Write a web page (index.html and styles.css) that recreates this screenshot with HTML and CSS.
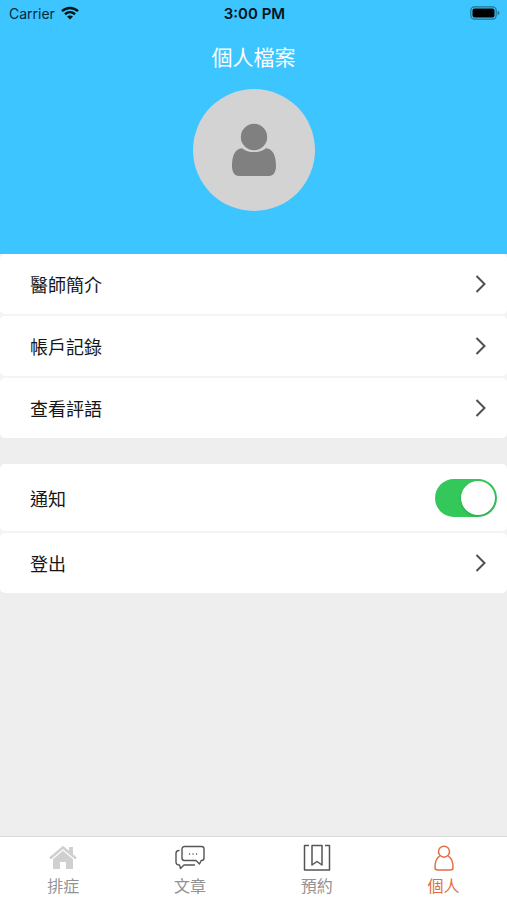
FILE: index.html
```html
<!DOCTYPE html>
<html lang="zh-Hant">
<head>
<meta charset="utf-8">
<meta name="viewport" content="width=device-width, initial-scale=1">
<title>個人檔案</title>
<link rel="stylesheet" href="styles.css">
</head>
<body>
<header class="profile">
  <div class="status">
    <div class="status-left">
      <span>Carrier</span>
      <svg class="wifi" width="18" height="14" viewBox="0 0 18 14" aria-hidden="true">
        <path d="M1 5.2C5.6 .8 12.4 .8 17 5.2M4 8.2c3-2.7 7-2.7 10 0" fill="none" stroke="#06141a" stroke-width="2.5"/>
        <path d="M6 10.5c1.8-1.5 4.2-1.5 6 0l-3 3z" fill="#06141a"/>
      </svg>
    </div>
    <span class="time">3:00 PM</span>
    <svg class="battery" width="30" height="14" viewBox="0 0 30 14" aria-hidden="true">
      <rect x=".8" y=".8" width="25.4" height="12.4" rx="3.6" fill="none" stroke="#237394" stroke-width="1.2"/>
      <rect x="2.5" y="2.5" width="22" height="9" rx="2" fill="#000"/>
      <path d="M27.6 4.8c2.4 .8 2.4 3.6 0 4.4z" fill="#237394"/>
    </svg>
  </div>
  <h1>個人檔案</h1>
  <div class="avatar">
    <svg width="44" height="54" viewBox="0 0 44 54" role="img" aria-label="頭像">
      <circle cx="22" cy="14" r="13.2" fill="#808080"/>
      <path d="M10 25.2C3 25.5 0 33 0 43c0 6 2.5 10 7 10h30c4.500 0 7-4 7-10 0-10-3-17.500-10-17.800-6.500 5.200-17.500 5.200-24 0z" fill="#808080"/>
    </svg>
  </div>
</header>
<main>
  <section class="group">
    <a class="row" href="#intro">醫師簡介<svg class="chevron" width="12" height="18" viewBox="0 0 12 18" aria-hidden="true"><path d="M1.500 1l8 8-8 8"/></svg></a>
    <a class="row" href="#account">帳戶記錄<svg class="chevron" width="12" height="18" viewBox="0 0 12 18" aria-hidden="true"><path d="M1.500 1l8 8-8 8"/></svg></a>
    <a class="row" href="#reviews">查看評語<svg class="chevron" width="12" height="18" viewBox="0 0 12 18" aria-hidden="true"><path d="M1.500 1l8 8-8 8"/></svg></a>
  </section>
  <section class="group">
    <div class="row row-switch">
      <label for="notify">通知</label>
      <input class="switch" id="notify" type="checkbox" role="switch" checked>
    </div>
    <a class="row" href="#logout">登出<svg class="chevron" width="12" height="18" viewBox="0 0 12 18" aria-hidden="true"><path d="M1.500 1l8 8-8 8"/></svg></a>
  </section>
</main>
<nav class="tabs">
  <a href="#triage">
    <svg width="30" height="28" viewBox="0 0 30 28" aria-hidden="true">
      <path d="M2 14.500L15 3.500l13 11" fill="none" stroke="#d0d0d0" stroke-width="2.600"/>
      <path d="M21 3h4v8l-4-3.500zM5 15.200l10-8.500 10 8.500V25h-7v-7h-6v7H5z" fill="#d0d0d0"/>
    </svg>
    排症
  </a>
  <a href="#articles">
    <svg width="30" height="28" viewBox="0 0 30 28" fill="none" stroke="#555" stroke-width="1.400" stroke-linejoin="round" stroke-linecap="round" aria-hidden="true">
      <path d="M9.500 2.500h17a2.500 2.500 0 0 1 2.500 2.500v9a2.500 2.500 0 0 1-2.500 2.500H26.200l-1.700 3.500-3.500-3.500H9.500A2.500 2.500 0 0 1 7 14V5a2.500 2.500 0 0 1 2.500-2.500z"/>
      <path d="M4 6.500C2 6.500 1 7.500 1 9.500V18c0 2 1 3 3.500 3L5.500 24.500 9 21h10.500"/>
      <path d="M14.500 10h.1M18 10h.1M21.500 10h.1"/>
    </svg>
    文章
  </a>
  <a href="#booking">
    <svg width="30" height="28" viewBox="0 0 30 28" fill="none" stroke="#555" stroke-width="1.500" stroke-linejoin="round" aria-hidden="true">
      <path d="M7 1.500H2.500v24.500h25V1.500H23"/>
      <path d="M10 1.500h10V21l-5-3.500-5 3.500z"/>
    </svg>
    預約
  </a>
  <a class="active" href="#profile" aria-current="page">
    <svg width="30" height="28" viewBox="0 0 30 28" fill="none" stroke="#e36d43" stroke-width="1.500" stroke-linejoin="round" aria-hidden="true">
      <circle cx="15" cy="7.700" r="5.500"/>
      <path d="M10.800 12.200C7.500 14 6 18.500 6 23.500c0 1.700.8 2.500 2.500 2.500h13c1.700 0 2.500-.8 2.500-2.500 0-5-1.500-9.500-4.800-11.300"/>
    </svg>
    個人
  </a>
</nav>
</body>
</html>
```
FILE: styles.css
```css
* {
  box-sizing: border-box;
}

body {
  margin: 0;
  min-height: 100vh;
  display: flex;
  flex-direction: column;
  background: #eee;
  color: #161616;
  font-family: Inter, "Noto Sans CJK TC", sans-serif;
}

a {
  color: inherit;
  text-decoration: none;
}

.profile {
  display: flex;
  flex-direction: column;
  align-items: center;
  padding-bottom: 43px;
  background: #3cc5ff;
}

.status {
  align-self: stretch;
  display: grid;
  grid-template-columns: 1fr auto 1fr;
  align-items: center;
  height: 26px;
  padding: 0 7px 0 9px;
  color: #06283a;
  font-size: 14px;
}

.status-left {
  display: flex;
  align-items: center;
  gap: 6px;
}

.time {
  color: #06141a;
  font-size: 15px;
  font-weight: 600;
}

.battery {
  justify-self: end;
}

h1 {
  margin: 16px 0 15px;
  color: #fff;
  font-size: 21px;
  font-weight: 400;
  line-height: 32px;
}

.avatar {
  display: grid;
  place-items: center;
  width: 122px;
  height: 122px;
  border-radius: 50%;
  background: #d3d3d3;
}

main {
  flex: 1;
  display: flex;
  flex-direction: column;
  gap: 26px;
}

.group {
  display: flex;
  flex-direction: column;
  gap: 2px;
  border-radius: 5px;
  background: #f4f4f4;
}

.row {
  display: flex;
  align-items: center;
  justify-content: space-between;
  height: 60px;
  padding: 0 20px 0 30px;
  border-radius: 5px;
  background: #fff;
  font-size: 18px;
}

.row-switch {
  height: 67px;
  padding-right: 10px;
}

.chevron {
  fill: none;
  stroke: #505050;
  stroke-width: 2;
}

.switch {
  appearance: none;
  display: flex;
  justify-content: flex-end;
  width: 62px;
  height: 38px;
  margin: 0;
  padding: 2px;
  border-radius: 19px;
  background: #34c759;
}

.switch::before {
  content: "";
  width: 34px;
  height: 34px;
  border-radius: 50%;
  background: #fff;
  box-shadow: 0 1px 3px rgba(0, 0, 0, 0.2);
}

.switch:not(:checked) {
  justify-content: flex-start;
  background: #ddd;
}

.tabs {
  display: grid;
  grid-template-columns: repeat(4, 1fr);
  height: 64px;
  padding-top: 7px;
  border-top: 1px solid #d9d9d9;
  background: #fff;
  color: #929292;
  font-size: 16px;
  line-height: 28px;
}

.tabs a {
  display: flex;
  flex-direction: column;
  align-items: center;
}

.tabs .active {
  color: #e36d43;
}
```
